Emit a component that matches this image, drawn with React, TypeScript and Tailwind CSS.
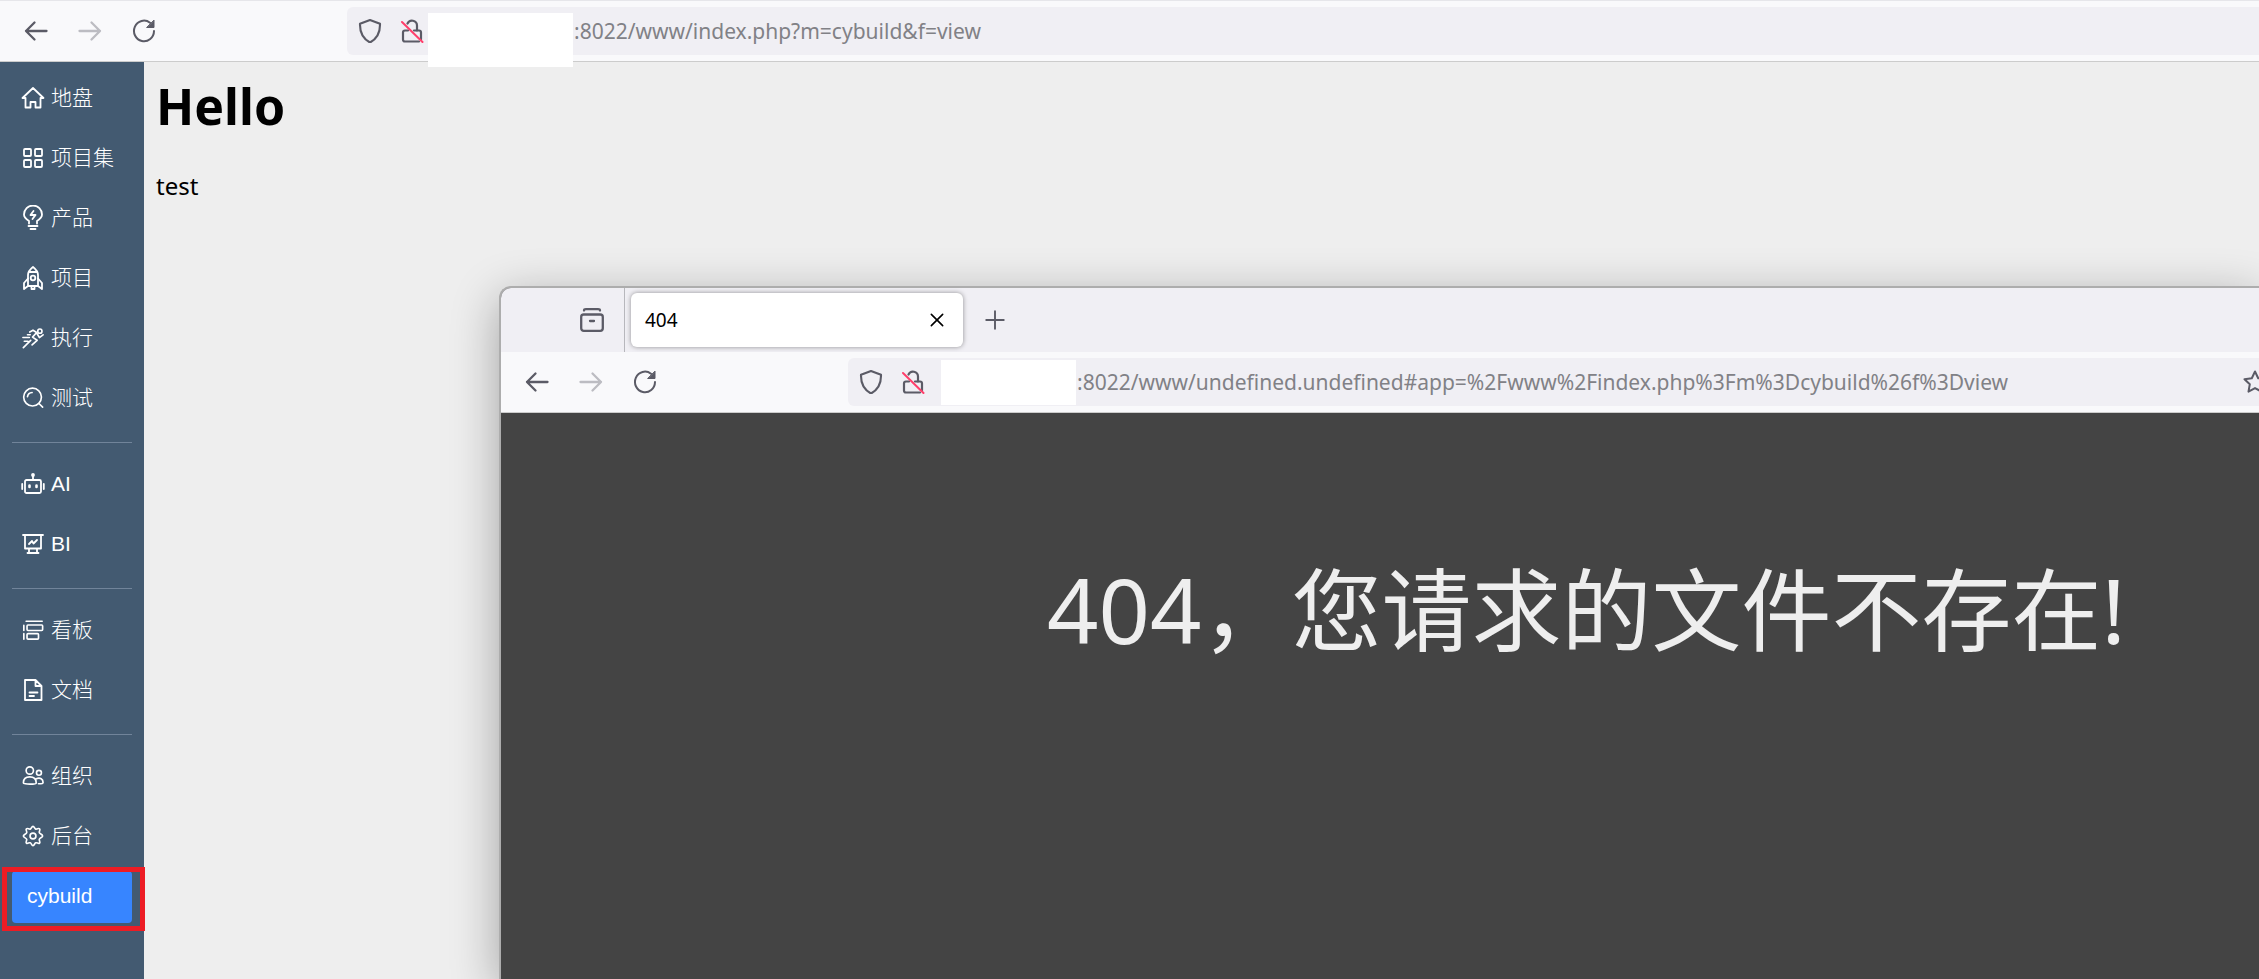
import React from 'react';
import clsx from 'clsx';

type IconProps = { className?: string; children: React.ReactNode };

const Icon: React.FC<IconProps> = ({ className = 'size-6', children }) => (
  <svg
    viewBox="0 0 24 24"
    className={clsx('shrink-0', className)}
    fill="none"
    stroke="currentColor"
    strokeWidth="1.8"
    strokeLinecap="round"
    strokeLinejoin="round"
    aria-hidden="true"
  >
    {children}
  </svg>
);

const HomeIcon = () => (
  <Icon>
    <path d="M1.5 12 12 2l10.5 10h-3v9.500h-5V16h-5v5.500h-5V12z" />
  </Icon>
);

const GridIcon = () => (
  <Icon>
    <rect x="3" y="3" width="7" height="7" rx="1" />
    <rect x="14" y="3" width="7" height="7" rx="1" />
    <rect x="3" y="14" width="7" height="7" rx="1" />
    <rect x="14" y="14" width="7" height="7" rx="1" />
  </Icon>
);

const BulbIcon = () => (
  <Icon className="h-[26px] w-6">
    <path d="M8 17.500V15C4.800 13 3 11 3 8.500a9 9 0 0 1 18 0c0 2.500-1.800 4.500-5 6.500v2.500" />
    <path d="M7.500 20h9M9.500 23h5" />
    <path d="m12.500 5-3 4h5L11.500 13" />
  </Icon>
);

const RocketIcon = () => (
  <Icon className="h-[26px] w-6">
    <path d="M7 20V9c0-3.500 2.500-6 5-8 2.500 2 5 4.500 5 8v11z" />
    <path d="M7 12.500 3 17v6l4-3M17 12.500l4 4.500v6l-4-3M8.500 6h7M10.500 20v3h3v-3" />
    <circle cx="12" cy="12" r="2.300" />
  </Icon>
);

const RunIcon = () => (
  <Icon className="mx-px size-[22px]">
    <circle cx="19.500" cy="4.500" r="2.300" />
    <path d="M8.500 5.500 12 3.500l4 2.500-4.500 5 5 3.500-5.500 5M16 6.500l3 5 4-3M1.500 22.500l8-8M1 11.500h7M2.500 15.500h4M6 8.500h3" />
  </Icon>
);

const SearchIcon = () => (
  <Icon className="mx-px size-[22px]">
    <circle cx="11.500" cy="11" r="9.700" />
    <path d="m18.500 18 4 4M6 10.500A5.500 5.500 0 0 1 11 6" />
  </Icon>
);

const RobotIcon = () => (
  <Icon>
    <rect x="4" y="8" width="16" height="13" rx="1.500" />
    <path d="M12 8V3M1.200 12v5M22.800 12v5" />
    <circle cx="12" cy="3" r="1" />
    <path d="M8.500 13.500v1.500M15.500 13.500v1.500" strokeWidth="2.600" />
  </Icon>
);

const BoardIcon = () => (
  <Icon>
    <path d="M2 3h20M4 3v13.500h16V3M8 16.500V21M16 16.500V21M6.500 21h11M8 12l3-3 1.500 2.500L16 8" />
  </Icon>
);

const KanbanIcon = () => (
  <Icon className="mx-px size-[22px]">
    <path d="M4.500 2.500H22M2 7v5.500M2 16v6" />
    <rect x="5.500" y="6.500" width="17" height="6" rx="1" />
    <rect x="5.500" y="16" width="12.500" height="6" rx="1" />
  </Icon>
);

const DocIcon = () => (
  <Icon>
    <path d="M4 2h10.500l6 6v14H4zM14.500 2v6h6M8.500 14.500h8M8.500 18h4.500" />
  </Icon>
);

const PeopleIcon = () => (
  <Icon className="mx-px size-[22px]">
    <circle cx="8.500" cy="6" r="4" />
    <circle cx="18.500" cy="8.500" r="2.700" />
    <path d="M1.500 19.500c0-4 2.700-6.500 7-6.500s7 2.500 7 6.500c0 1.800-14 1.800-14 0zM15.500 15c4.500-2 7.500.5 7.500 4 0 1.500-2.500 1.500-5 1.500" />
  </Icon>
);

const GearIcon = () => (
  <Icon className="mx-px size-[22px]">
    <path d="M12 1.500c1.500 0 1.500 2.500 3 3s3-1.500 4.200-.300-.8 2.800-.3 4.200 3.600 1.800 3.600 3.600-3 2-3.600 3.500 1.500 3 .300 4.200-2.800-.8-4.200-.300-1.500 3.100-3 3.100-1.500-2.500-3-3.100-3 1.500-4.200.300.8-2.800.300-4.200S1.500 13.800 1.500 12s3-2 3.600-3.600-1.500-3-.300-4.200 2.800.8 4.200.300S10.500 1.500 12 1.500z" />
    <circle cx="12" cy="12" r="3.200" />
  </Icon>
);

interface NavEntry {
  label: string;
  icon?: React.FC;
  active?: boolean;
}

const NAV_GROUPS: NavEntry[][] = [
  [
    { label: '地盘', icon: HomeIcon },
    { label: '项目集', icon: GridIcon },
    { label: '产品', icon: BulbIcon },
    { label: '项目', icon: RocketIcon },
    { label: '执行', icon: RunIcon },
    { label: '测试', icon: SearchIcon },
  ],
  [
    { label: 'AI', icon: RobotIcon },
    { label: 'BI', icon: BoardIcon },
  ],
  [
    { label: '看板', icon: KanbanIcon },
    { label: '文档', icon: DocIcon },
  ],
  [
    { label: '组织', icon: PeopleIcon },
    { label: '后台', icon: GearIcon },
    { label: 'cybuild', active: true },
  ],
];

const NavItem: React.FC<{ entry: NavEntry }> = ({ entry }) => {
  const EntryIcon = entry.icon;
  return (
    <li className="relative">
      <a
        href="#"
        aria-current={entry.active ? 'page' : undefined}
        className={clsx(
          'flex h-[52px] items-center rounded-sm pb-[2px] whitespace-nowrap',
          entry.active ? 'bg-[#3785ff] pl-[15px]' : 'gap-[6px] pl-[9px]'
        )}
      >
        {EntryIcon && <EntryIcon />}
        {entry.label}
      </a>
      {entry.active && (
        <span className="pointer-events-none absolute -top-1 -right-[13px] -bottom-2 -left-[10px] border-[5px] border-[#ed1c24]" />
      )}
    </li>
  );
};

const Sidebar = () => (
  <nav className="w-36 shrink-0 bg-[#435a71] px-3 pt-[11px] font-['Liberation_Sans','Noto_Sans_CJK_SC',sans-serif] text-[21px] leading-[30px] font-light text-white">
    {NAV_GROUPS.map((group, index) => (
      <React.Fragment key={index}>
        {index > 0 && <hr className="mt-[17px] mb-4 border-t border-[#71849a]" />}
        <ul className="flex flex-col gap-2">
          {group.map((entry) => (
            <NavItem key={entry.label} entry={entry} />
          ))}
        </ul>
      </React.Fragment>
    ))}
  </nav>
);

interface BrowserBarProps {
  url: string;
  maskClass: string;
  className?: string;
  bookmark?: boolean;
}

const BrowserBar: React.FC<BrowserBarProps> = ({ url, maskClass, className, bookmark }) => (
  <div
    className={clsx(
      'flex shrink-0 items-center border-b border-[#cccccc] bg-[#f9f9fb] pl-6 text-[#5b5b66]',
      className
    )}
  >
    <button type="button" aria-label="Back">
      <Icon>
        <path d="M22.500 12H2M10.500 3.500 2 12l8.500 8.500" strokeWidth="2.300" />
      </Icon>
    </button>
    <button type="button" aria-label="Forward" disabled className="ml-[30px] text-[#bcbcc2]">
      <Icon>
        <path d="M1.500 12H22M13.500 3.500 22 12l-8.500 8.500" strokeWidth="2.300" />
      </Icon>
    </button>
    <button type="button" aria-label="Reload" className="ml-[30px]">
      <Icon>
        <path d="M22 12a10 10.300 0 1 1-4-8.300" strokeWidth="2" />
        <path d="M22 1.500v7h-7z" fill="currentColor" strokeWidth="1" />
      </Icon>
    </button>
    <div className="ml-[191px] flex h-12 min-w-0 flex-1 items-center rounded-l-md bg-[#f0eff4] pl-[11px]">
      <Icon>
        <path d="M12 1 22 4.800C22.300 14 18.500 20 12 23.500 5.500 20 1.700 14 2 4.800z" strokeWidth="2.100" />
      </Icon>
      <Icon className="ml-[18px] size-6">
        <path d="M21 20.500V13.500a2 2 0 0 0-2-2h-5M8 11.500H5a2 2 0 0 0-2 2v7a2 2 0 0 0 2 2h14" strokeWidth="2.200" />
        <path d="M7.500 4.500A5 5 0 0 1 17 6.500v5" strokeWidth="2.200" />
        <path d="M2 3 22.500 23" stroke="#ff3f6b" strokeWidth="2" />
      </Icon>
      <span className={clsx('z-10 shrink-0 bg-white', maskClass)} />
      <input
        type="text"
        aria-label="Address"
        defaultValue={url}
        className="min-w-0 flex-1 bg-transparent pl-px font-['Noto_Sans',sans-serif] text-[21px] leading-[30px] text-[#818186] outline-none"
      />
      {bookmark && (
        <button type="button" aria-label="Bookmark" className="-mr-2 shrink-0">
          <Icon>
            <path
              d="m12 1.500 3.200 6.700 7.300 1-5.300 5.100 1.300 7.300-6.500-3.500-6.500 3.500 1.300-7.300-5.300-5.100 7.300-1z"
              strokeWidth="2"
            />
          </Icon>
        </button>
      )}
    </div>
  </div>
);

const TabStrip = () => (
  <div className="flex h-16 shrink-0 items-center bg-[#f0eff4] text-[#5b5b66]">
    <div className="flex h-full w-[124px] items-center justify-end border-r border-[#b7b7bc] pr-5">
      <button type="button" aria-label="Recent tabs">
        <Icon>
          <rect x="1.200" y="6.500" width="21.600" height="16.300" rx="2.500" strokeWidth="2.300" />
          <path d="M4 2.500C4 1.500 5 1.200 6 1.200h12c1 0 2 .3 2 1.300M10 13h4" strokeWidth="2.300" />
        </Icon>
      </button>
    </div>
    <div className="ml-[6px] flex h-[54px] w-[332px] items-center justify-between rounded-md bg-white pr-[18px] pl-[14px] text-black shadow-[0_0_5px_rgba(0,0,0,0.4)]">
      <span className="font-['Noto_Sans',sans-serif] text-[19px] leading-[24px]">404</span>
      <button type="button" aria-label="Close tab">
        <Icon className="size-4">
          <path d="M3.500 3.500l17 17M20.500 3.500l-17 17" strokeWidth="2.400" />
        </Icon>
      </button>
    </div>
    <button type="button" aria-label="New tab" className="ml-[22px]">
      <Icon className="size-5">
        <path d="M12 1.500v21M1.500 12h21" strokeWidth="2.300" />
      </Icon>
    </button>
  </div>
);

const PopupWindow = () => (
  <section className="absolute top-[286px] right-0 bottom-0 left-[499px] flex flex-col overflow-hidden rounded-tl-xl border-t-2 border-l-2 border-[#adadad] bg-[#444444] shadow-[0_12px_48px_rgba(0,0,0,0.32)]">
    <TabStrip />
    <BrowserBar
      className="h-[61px]"
      url=":8022/www/undefined.undefined#app=%2Fwww%2Findex.php%3Fm%3Dcybuild%26f%3Dview"
      maskClass="ml-4 h-[45px] w-[135px]"
      bookmark
    />
    <h1 className="pt-[130px] pl-[546px] font-['Noto_Sans','Noto_Sans_CJK_SC',sans-serif] text-[90px] leading-[132px] whitespace-nowrap text-[#eeeeee]">
      404，您请求的文件不存在!
    </h1>
  </section>
);

const App: React.FC = () => {
  return (
    <div className="relative flex h-screen flex-col overflow-hidden bg-[#eeeeee]">
      <BrowserBar
        className="h-[62px] border-t border-t-[#e6e6ea]"
        url=":8022/www/index.php?m=cybuild&f=view"
        maskClass="mt-[18px] ml-1 h-[54px] w-[145px]"
      />
      <div className="flex min-h-0 flex-1">
        <Sidebar />
        <main className="flex-1 pt-[11px] pl-3 font-['Noto_Sans',sans-serif] text-black">
          <h1 className="text-[50px] leading-[66px] font-bold">Hello</h1>
          <p className="mt-[31px] text-2xl">test</p>
        </main>
      </div>
      <PopupWindow />
    </div>
  );
};

export default App;
